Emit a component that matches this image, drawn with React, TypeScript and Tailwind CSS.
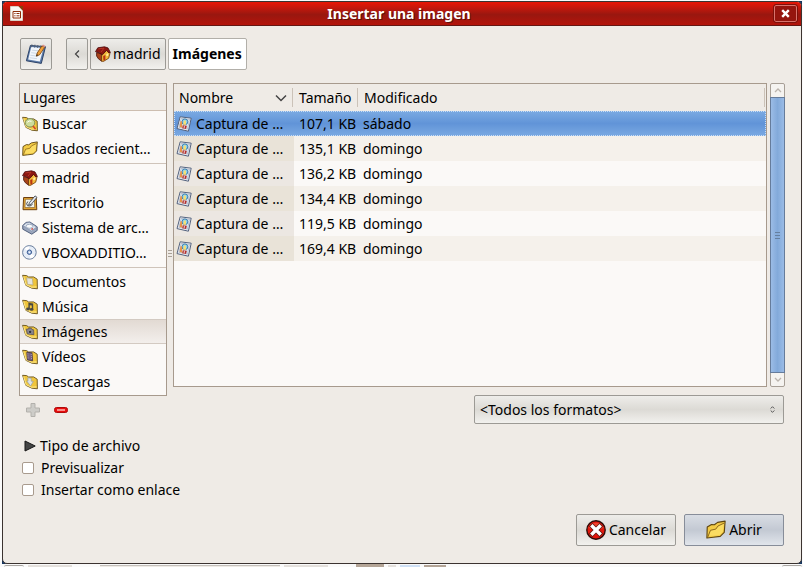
import React, { useState } from "react";

type IconProps = { size?: string };
type FolderMark = "search" | "doc" | "music" | "image" | "video" | "down";

function HouseIcon() {
  return (
    <svg viewBox="0 0 16 16" className="size-4 shrink-0" aria-hidden="true">
      <path d="M1.6 6.5 6.6 8v7.2L3.4 12.8 1.6 10Z" fill="#a8441a" stroke="#4a1206" strokeWidth=".8" />
      <path d="M6.6 7.5 12 3.6l2.9 3.9-1.2 4.7-5.2 3.2-1.9-.2Z" fill="#f3b93c" stroke="#6b3608" strokeWidth=".8" />
      <path d="M.5 5.6 2.8 1.8 9.5.8 13 1.9l2.4 4.6-1.5.4L11.5 4.4 7.4 8.8Q4 6.2.5 5.6Z" fill="#8c1710" stroke="#47070a" strokeWidth=".8" />
      <path d="m3.4 2.9 5.6-.8-3 4" fill="none" stroke="#b8382a" strokeWidth=".9" />
      <path d="M8.2 10 10.4 9v5l-2 .8Z" fill="#b83412" />
      <path d="m11.4 8 1.8-.7v2.2l-1.8.8Z" fill="#fff2a6" />
    </svg>
  );
}

function OpenFolderIcon({ size = "size-4" }: IconProps) {
  return (
    <svg viewBox="0 0 16 16" className={`${size} shrink-0`} aria-hidden="true">
      <path d="M.7 14.4 1 5.6l3.4-2 2.3.2 2.6-1.9 6-1-.7 9-3.2 3.2-5.6.7Z" fill="#f3cb45" stroke="#5e4510" strokeWidth=".9" strokeLinejoin="round" />
      <path d="M2 12.6 3.6 8.2l4.2-.9 1.8-2.5 4.6-2-.7 6.6-2.6 2.5-5 .7Z" fill="#fbdc62" />
      <path d="M1.4 13.6 3.6 8.2l4.2-.9 1.8-2.5 5-2.4" fill="none" stroke="#8f6a1b" strokeWidth=".8" strokeLinejoin="round" />
    </svg>
  );
}

function FolderIcon({ mark }: { mark: FolderMark }) {
  return (
    <svg viewBox="0 0 16 16" className="size-4 shrink-0" aria-hidden="true">
      <path d="M.6 1.3 4.6 1.6 6.6 3l5-.1 3.6 2.3.2 9.6-5.6-.6-6-2.9Z" fill="#f0c53b" stroke="#66501c" strokeWidth=".9" strokeLinejoin="round" />
      <path d="m1.6 2.3 2.5 8.4 5.4 2.5 5-.3" fill="none" stroke="#fbe585" strokeWidth="1.1" />
      {mark === "search" && (
        <g>
          <ellipse cx="8" cy="6.8" rx="4.8" ry="4.2" fill="#cddc9a" stroke="#788b55" strokeWidth=".9" />
          <path d="m11 10 2.6 3.2" stroke="#d6472b" strokeWidth="1.7" />
          <path d="M5.3 6.3q1.8-2.2 4.2-1" fill="none" stroke="#fff" />
        </g>
      )}
      {mark === "doc" && <path d="m4.6 3.8 5.8.8.6 6.4-5.5-.7Z" fill="#e5e4db" stroke="#b0a886" strokeWidth=".7" />}
      {mark === "music" && (
        <g fill="#4b4a42">
          <path d="m6.4 3.8 4.8.6v5.8H9.8V6.6l-2-.3v3.8H6.4Z" />
          <ellipse cx="6" cy="10" rx="1.9" ry="1.4" />
          <ellipse cx="9.6" cy="10.4" rx="1.9" ry="1.4" />
        </g>
      )}
      {mark === "image" && (
        <g>
          <path d="m4.2 5.2 2-.2.8-1 2.4.3.6 1.2 1.6.3.3 4.9-6.6-.8Z" fill="#85818a" stroke="#504a55" strokeWidth=".7" />
          <circle cx="8.1" cy="7.9" r="1.7" fill="#343640" stroke="#b7b6bd" strokeWidth=".5" />
        </g>
      )}
      {mark === "video" && (
        <g>
          <path d="m4.8 3.2 5.2.7.6 7.9-5.2-.9Z" fill="#756080" stroke="#40324b" strokeWidth=".8" />
          <path d="m5.8 4.4.3 5.9M9.2 4.9l.4 6" stroke="#c6b6ce" strokeWidth=".8" strokeDasharray="1 1" />
        </g>
      )}
      {mark === "down" && <path d="m5.8 3.8 3.4.4.1 3 2 .2-2.7 4.6L4.7 7l1.3.1Z" fill="#dfe3e5" stroke="#97a0a4" strokeWidth=".7" />}
    </svg>
  );
}

function DesktopIcon() {
  return (
    <svg viewBox="0 0 16 16" className="size-4 shrink-0" aria-hidden="true">
      <path d="M1.6 2.5h12.6l.6 12.2H1Z" fill="#e0a232" stroke="#6d3f10" />
      <path d="M3.4 4.3h9l.3 8.2H3Z" fill="#f3f4ee" stroke="#8c6830" strokeWidth=".7" />
      <path d="m6.6 10.2.8-2.5L13 .9l2 1.4-5.6 6.8Z" fill="#e3e7ee" stroke="#39404a" strokeWidth=".8" />
      <path d="M5.8 6.5q-2.2 2.3-.3 4.2 2.6 1.2 5-1.3" fill="none" stroke="#474c52" />
    </svg>
  );
}

function DriveIcon() {
  return (
    <svg viewBox="0 0 16 16" className="size-4 shrink-0" aria-hidden="true">
      <path d="m.7 5.6 3.2-3.2 4-.4 7.3 4.8v3.7l-5.4 3.7L.8 9.2Z" fill="#9ba7bd" stroke="#485775" strokeWidth=".9" strokeLinejoin="round" />
      <path d="m1.2 5.7 3-2.8 3.5-.4 6.8 4.6L9.6 11Z" fill="#dce3ed" stroke="#7786a2" strokeWidth=".6" />
      <ellipse cx="7.4" cy="6.3" rx="3.4" ry="2" fill="#f8fafc" stroke="#8090ab" strokeWidth=".7" />
      <path d="m9.4 9.4 1.6-.8" stroke="#d43f35" strokeWidth="1.3" />
    </svg>
  );
}

function DiscIcon() {
  return (
    <svg viewBox="0 0 16 16" className="size-4 shrink-0" aria-hidden="true">
      <circle cx="7.4" cy="7.4" r="6.8" fill="#e6edf7" stroke="#6a7e9c" />
      <path d="m7.4 7.4-5-4A6 6 0 0 1 7 1.4Zm0 0 5.2 3.6A6 6 0 0 1 8.3 13.4Z" fill="#fff" />
      <circle cx="7.4" cy="7.2" r="2.2" fill="#a9bfe0" stroke="#37588f" />
      <circle cx="7.4" cy="7.2" r=".8" fill="#fff" />
    </svg>
  );
}

function PictureFileIcon() {
  return (
    <svg viewBox="0 0 16 16" className="size-4 shrink-0" aria-hidden="true">
      <path d="M4.2.8 15.2 2.2 12.4 15.2 1 12.6Z" fill="#fbfcfe" stroke="#52617d" strokeLinejoin="round" />
      <path d="m5.2 2.4 8.3 1-2 9.9-8.7-1.9Z" fill="#dbe9f5" stroke="#8391a8" strokeWidth=".5" />
      <circle cx="8.9" cy="5.8" r="2.9" fill="#8ed3ee" stroke="#3777a6" strokeWidth=".9" />
      <path d="M8 4.4h1.9l.2 4.4H7.2Z" fill="#f7df74" />
      <path d="m4.4 5.5 1.4-.5.6 6.7-2.8-.6Z" fill="#e79248" />
      <path d="m6.8 9.2 4.1.5-.8 3.2-3.9-.7Z" fill="#b22f2d" />
      <path d="m8.4 9.8-.3 2.6" stroke="#fff" strokeWidth=".8" />
    </svg>
  );
}

function NotepadIcon() {
  return (
    <svg viewBox="0 0 22 22" className="size-[22px]" aria-hidden="true">
      <path d="m5.4 2.5 15.1 1.2L16.3 20.4 1.4 17.8Z" fill="#5b7ba8" stroke="#2e4468" strokeLinejoin="round" />
      <path d="m6.2 4 12.4 1-3.8 13.6-11.6-2Z" fill="#f2f6fb" />
      <path d="m7.2 7.2 8 .7m-9 1.8 7.6.8m-8.4 1.8 7.5.9m-8.2 1.5 7.3 1" stroke="#c3d0e0" strokeWidth=".8" />
      <path d="m6.9 1.4-.4 2.8m3.4-2.5-.4 2.8M12.9 2l-.4 2.8m3.4-2.4-.4 2.7" stroke="#566273" />
      <path d="m11.4 13.2.8-3.2L17 2.8l2.6 1.6-5 7.4Z" fill="#f2a13a" stroke="#75420f" strokeWidth=".8" />
      <path d="m17 2.8 2.6 1.6.9-1.5L18 1.4Z" fill="#dc9189" />
      <path d="m11.4 13.2.4-2 1.3.9Z" fill="#222" />
    </svg>
  );
}

function DocumentIcon() {
  return (
    <svg viewBox="0 0 14 15" className="h-[15px] w-3.5" aria-hidden="true">
      <path d="M.5.5h8l4 4v10H.5Z" fill="#f9f7f3" stroke="#d8cfc3" />
      <path d="M8.5 0H13v4.8Z" fill="#88400b" />
      <path d="M3 5.5h7.5V12H3Z" fill="#fff" stroke="#8d2e08" />
      <path d="M4.3 7.5h1.2m1 0h3M4.3 9.8h1.2m1 0h3" stroke="#8d2e08" />
    </svg>
  );
}

function CancelIcon() {
  return (
    <svg viewBox="0 0 20 20" className="size-5 shrink-0" aria-hidden="true">
      <circle cx="10" cy="10" r="9.2" fill="#e3170d" stroke="#2d0c08" strokeWidth="1.4" />
      <path d="M2.5 8a8 8 0 0 1 15 0Q10 11 2.5 8" fill="#f4553b" opacity=".7" />
      <path d="m6.5 6.5 7 7m0-7-7 7" stroke="#65150e" strokeWidth="5" strokeLinecap="square" />
      <path d="m6.5 6.5 7 7m0-7-7 7" stroke="#fff" strokeWidth="3.4" strokeLinecap="square" />
    </svg>
  );
}

const places: { label: string; icon: React.ReactNode }[][] = [
  [
    { label: "Buscar", icon: <FolderIcon mark="search" /> },
    { label: "Usados recient…", icon: <OpenFolderIcon /> },
  ],
  [
    { label: "madrid", icon: <HouseIcon /> },
    { label: "Escritorio", icon: <DesktopIcon /> },
    { label: "Sistema de arc…", icon: <DriveIcon /> },
    { label: "VBOXADDITIO…", icon: <DiscIcon /> },
  ],
  [
    { label: "Documentos", icon: <FolderIcon mark="doc" /> },
    { label: "Música", icon: <FolderIcon mark="music" /> },
    { label: "Imágenes", icon: <FolderIcon mark="image" /> },
    { label: "Vídeos", icon: <FolderIcon mark="video" /> },
    { label: "Descargas", icon: <FolderIcon mark="down" /> },
  ],
];

const files = [
  { size: "107,1 KB", date: "sábado" },
  { size: "135,1 KB", date: "domingo" },
  { size: "136,2 KB", date: "domingo" },
  { size: "134,4 KB", date: "domingo" },
  { size: "119,5 KB", date: "domingo" },
  { size: "169,4 KB", date: "domingo" },
];

const raised =
  "rounded-[2px] border border-[#9c9a95] bg-linear-to-b from-[#eeedea] via-[#dcdad5] to-[#f2f1ee]";

function HeaderCell({ children }: { children: React.ReactNode }) {
  return (
    <div className="flex h-[27px] items-center justify-between pr-px pl-[5px]">
      {children}
      <span className="h-[19px] w-px bg-[#cbc2b8]" />
    </div>
  );
}

function Grip() {
  return (
    <span className="flex flex-col gap-[2px]" aria-hidden="true">
      <i className="h-px w-1 bg-[#a9a197]" />
      <i className="h-px w-1 bg-[#a9a197]" />
      <i className="h-px w-1 bg-[#a9a197]" />
    </span>
  );
}

export default function App() {
  const [place, setPlace] = useState("Imágenes");
  const [selected, setSelected] = useState(0);

  return (
    <div className="flex min-h-screen flex-col bg-[#fafafa] pt-px pr-px pl-[2px] font-['Noto_Sans','Open_Sans',sans-serif] text-sm leading-5 text-black">
      <main className="flex flex-1 flex-col bg-[#17365e]">
        <div className="flex flex-1 flex-col overflow-hidden rounded-[5px] border border-[#3b3330] bg-[#efebe6]">
          <header className="flex h-6 shrink-0 items-center border-b border-[#641713] bg-linear-to-b from-[#e31606] from-5% via-[#99170f] via-55% to-[#b4130a] pr-1 pl-[7px]">
            <DocumentIcon />
            <h1 className="flex-1 text-center font-bold text-white [text-shadow:1px_1px_0_#601009]">Insertar una imagen</h1>
            <button aria-label="Cerrar" className="flex h-[17px] w-[23px] items-center justify-center rounded-[2px] border border-[#d9736c] bg-[#95150e] outline outline-[#7d100a]">
              <svg viewBox="0 0 9 9" className="size-[9px]" aria-hidden="true">
                <path d="m1.2 1.2 6.6 6.6m0-6.6-6.6 6.6" stroke="#fff" strokeWidth="2.4" />
              </svg>
            </button>
          </header>

          <div className="flex flex-1 flex-col px-4 pt-3">
            <nav className="flex h-8 gap-[2px] pl-px">
              <button aria-label="Escribir un nombre de archivo" className={`mr-3 flex w-8 items-center justify-center ${raised}`}>
                <NotepadIcon />
              </button>
              <button aria-label="Anterior" className={`flex w-[22px] items-center justify-center ${raised}`}>
                <svg viewBox="0 0 6 8" className="h-2 w-1.5" fill="none" stroke="#444" strokeWidth="1.2" aria-hidden="true"><path d="M5 .5 1.5 4 5 7.5" /></svg>
              </button>
              <button className={`flex items-center gap-[2px] px-1 ${raised}`}>
                <HouseIcon />
                madrid
              </button>
              <button className="rounded-[2px] border border-[#b2afa9] bg-white px-1 font-bold">Imágenes</button>
            </nav>

            <div className="mt-[13px] flex">
              <section className="flex w-[148px] shrink-0 flex-col" aria-label="Lugares">
                <div className="border border-[#a79a8d] bg-[#fbf9f7] pb-px">
                  <h2 className="h-[27px] border-b border-[#cdbeb0] bg-[#efebe6] px-[3px] leading-[27px]">Lugares</h2>
                  {places.map((group, index) => (
                    <ul key={index} className={index ? "mt-[2px] border-t border-[#cfc4ba] pt-px" : ""}>
                      {group.map((item) => (
                        <li key={item.label}>
                          <button
                            onClick={() => setPlace(item.label)}
                            className={`flex h-[25px] w-full items-center gap-1 pl-[2px] text-left whitespace-nowrap ${place === item.label ? "border-y border-[#d3cac2] bg-linear-to-b from-[#e2dad3] to-[#f3efec]" : ""}`}
                          >
                            {item.icon}
                            {item.label}
                          </button>
                        </li>
                      ))}
                    </ul>
                  ))}
                </div>
                <div className="flex h-7 items-center gap-3 pl-1.5">
                  <button aria-label="Añadir" disabled>
                    <svg viewBox="0 0 16 16" className="size-4" aria-hidden="true"><path d="M6 1.5h4V6h4.5v4H10v4.5H6V10H1.5V6H6Z" fill="#cdccc8" stroke="#b3b1ac" strokeLinejoin="round" /></svg>
                  </button>
                  <button aria-label="Quitar">
                    <svg viewBox="0 0 16 16" className="size-4" aria-hidden="true"><rect x="1.5" y="5.5" width="13" height="5" rx="2" fill="#e80d0d" stroke="#ae0909" /><path d="M4 8h8" stroke="#ffd5d0" strokeWidth="1.3" /></svg>
                  </button>
                </div>
              </section>

              <div className="flex w-1.5 shrink-0 items-center justify-center"><Grip /></div>

              <section className="flex min-w-0 flex-1 flex-col gap-2" aria-label="Archivos">
                <div className="flex flex-1 gap-[3px]">
                  <div className="min-w-0 flex-1 border border-[#a79a8d] bg-[#fbf9f7]">
                    <table className="w-full table-fixed border-collapse">
                      <colgroup><col className="w-[120px]" /><col className="w-[65px]" /><col /></colgroup>
                      <thead className="bg-[#efebe6] text-left">
                        <tr>
                          <th className="p-0 font-normal">
                            <HeaderCell>
                              Nombre
                              <svg viewBox="0 0 12 8" className="ml-auto mr-[5px] h-2 w-3" fill="none" stroke="#444" strokeWidth="1.5" aria-hidden="true"><path d="m1 1.5 5 5 5-5" /></svg>
                            </HeaderCell>
                          </th>
                          <th className="p-0 font-normal"><HeaderCell>Tamaño</HeaderCell></th>
                          <th className="p-0 font-normal"><HeaderCell>Modificado</HeaderCell></th>
                        </tr>
                      </thead>
                      <tbody>
                        {files.map((file, index) => {
                          const active = selected === index;
                          const nameBg = index % 2 ? "bg-[#e9e3d8]" : "bg-[#ece7e2]";
                          return (
                            <tr
                              key={index}
                              onClick={() => setSelected(index)}
                              className={`h-[25px] ${active ? "bg-linear-to-b from-[#7baae2] via-[#6194d8] to-[#7aa9e2] outline-1 -outline-offset-1 outline-dotted outline-[#c9def6]" : index % 2 ? "bg-[#f5f1eb]" : ""}`}
                            >
                              <td className={`p-0 ${active ? "" : index % 2 ? "bg-[#e9e3d8]" : nameBg}`}>
                                <div className="flex items-center gap-1 pl-[2px] whitespace-nowrap">
                                  <PictureFileIcon />
                                  Captura de …
                                </div>
                              </td>
                              <td className="p-0 pl-[5px] whitespace-nowrap">{file.size}</td>
                              <td className="p-0 pl-1">{file.date}</td>
                            </tr>
                          );
                        })}
                      </tbody>
                    </table>
                  </div>
                  <div className="flex w-[15px] shrink-0 flex-col rounded-[2px] border border-[#a79f96] bg-[#f5f3f0]">
                    <button aria-label="Subir" className="flex h-[13px] items-center justify-center">
                      <svg viewBox="0 0 8 5" className="h-[5px] w-2" fill="none" stroke="#bbb4ad" strokeWidth="1.3" aria-hidden="true"><path d="m1 4 3-3 3 3" /></svg>
                    </button>
                    <div className="-mx-px flex flex-1 items-center justify-center border border-[#667c9b] bg-linear-to-r from-[#9bbce6] via-[#83aada] to-[#9abbe6]">
                      <span className="flex flex-col gap-[2px]">
                        <i className="h-px w-[5px] bg-[#66809f]" /><i className="h-px w-[5px] bg-[#66809f]" /><i className="h-px w-[5px] bg-[#66809f]" />
                      </span>
                    </div>
                    <button aria-label="Bajar" className="flex h-[13px] items-center justify-center">
                      <svg viewBox="0 0 8 5" className="h-[5px] w-2" fill="none" stroke="#bbb4ad" strokeWidth="1.3" aria-hidden="true"><path d="m1 1 3 3 3-3" /></svg>
                    </button>
                  </div>
                </div>
                <div className="mr-px grid w-[310px] items-center self-end">
                  <select aria-label="Formato" className={`col-start-1 row-start-1 h-[29px] w-full appearance-none px-[5px] ${raised}`}>
                    <option>&lt;Todos los formatos&gt;</option>
                  </select>
                  <svg viewBox="0 0 5 7" className="pointer-events-none col-start-1 row-start-1 mr-[9px] h-[7px] w-[5px] justify-self-end" fill="none" stroke="#555" aria-hidden="true"><path d="m.7 2.5 1.8-1.8 1.8 1.8M.7 4.5l1.8 1.8 1.8-1.8" /></svg>
                </div>
              </section>
            </div>

            <div className="mt-3 flex flex-col gap-[2px] pl-[3px]">
              <button className="flex items-center gap-1 self-start pl-[2px]">
                <svg viewBox="0 0 12 12" className="size-3" aria-hidden="true"><path d="M1 1v10l10.2-5Z" fill="#454545" stroke="#171717" /></svg>
                Tipo de archivo
              </button>
              {["Previsualizar", "Insertar como enlace"].map((label) => (
                <label key={label} className="flex items-center gap-[7px] self-start">
                  <input type="checkbox" className="size-3 appearance-none rounded-[2px] border border-[#a99b8e] bg-white checked:bg-[#6194d8]" />
                  {label}
                </label>
              ))}
            </div>

            <footer className="mt-auto mr-px mb-[17px] flex justify-end gap-2">
              <button className={`flex h-8 w-[100px] items-center justify-center gap-[3px] ${raised}`}>
                <CancelIcon />
                Cancelar
              </button>
              <button className="flex h-8 w-[100px] items-center justify-center gap-[3px] rounded-[2px] border border-[#878d99] bg-linear-to-b from-[#d9dde4] via-[#c3c9d3] to-[#e1e5eb]">
                <OpenFolderIcon size="size-5" />
                Abrir
              </button>
            </footer>
          </div>
        </div>
      </main>
      <div className="flex h-[3px] shrink-0 items-end gap-1 pl-[2px]" aria-hidden="true">
        <i className="h-[2px] w-5 rounded-t-sm border-t border-[#aaa7a3]" />
        <i className="mr-6 h-[2px] w-11 bg-[#e4e0dc]" />
        <i className="h-[2px] w-[180px] border-t border-[#c4c0bb] bg-[#efebe6]" />
        <i className="mr-6 h-[2px] w-11 bg-[#e4e0dc]" />
        <i className="h-[3px] w-7 bg-[#b4a597]" />
        <i className="h-[2px] w-2 bg-[#e4e0dc]" />
        <i className="h-[2px] w-5 bg-[#cfe0f5]" />
        <i className="h-[2px] w-[22px] bg-[#b4a597]" />
        <i className="ml-auto h-[2px] w-5 rounded-t-sm border-t border-[#aaa7a3]" />
      </div>
    </div>
  );
}
